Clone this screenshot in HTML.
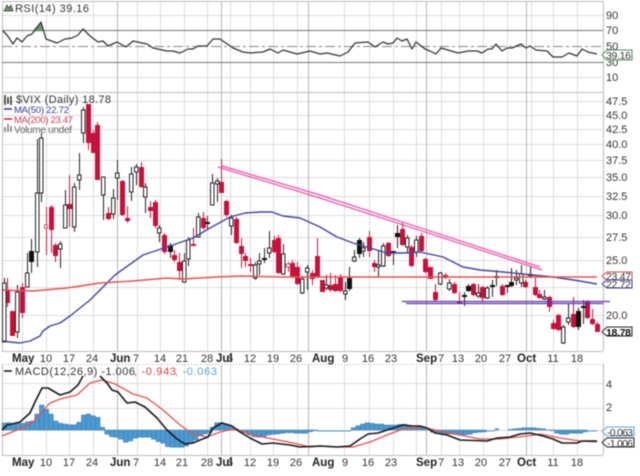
<!DOCTYPE html>
<html><head><meta charset="utf-8"><title>$VIX</title>
<style>html,body{margin:0;padding:0;background:#fff}svg{display:block;filter:blur(.4px)}text{font-family:"Liberation Sans",sans-serif;font-size:11px;fill:#333}.b{font-weight:bold;fill:#222;font-size:11.5px}.m{text-anchor:middle}</style></head>
<body>
<svg width="640" height="476" viewBox="0 0 640 476" xmlns="http://www.w3.org/2000/svg">
<rect width="640" height="476" fill="#fff"/>
<!-- grid -->
<path fill="none" stroke="#dcdcdc" d="M22.5 1V351M46.5 1V351M69.5 1V351M93.5 1V351M137.5 1V351M160.5 1V351M184.5 1V351M207.5 1V351M230.5 1V351M250.5 1V351M273.5 1V351M297.5 1V351M344.5 1V351M369.5 1V351M393.5 1V351M416.5 1V351M441.5 1V351M459.5 1V351M483.5 1V351M507.5 1V351M531.5 1V351M553.5 1V351M577.5 1V351
M22.5 364V455M46.5 364V455M69.5 364V455M93.5 364V455M137.5 364V455M160.5 364V455M184.5 364V455M207.5 364V455M230.5 364V455M250.5 364V455M273.5 364V455M297.5 364V455M344.5 364V455M369.5 364V455M393.5 364V455M416.5 364V455M441.5 364V455M459.5 364V455M483.5 364V455M507.5 364V455M531.5 364V455M553.5 364V455M577.5 364V455
M2 15.5H603M2 77.5H603M2 101.5H603M2 115.5H603M2 129.5H603M2 144.5H603M2 160.5H603M2 177.5H603M2 196.5H603M2 215.5H603M2 237.5H603M2 260.5H603M2 287.5H603M2 315.5H603M2 383.5H603M2 408.5H603M2 430.5H603"/>
<path fill="none" stroke="#b4b4b4" d="M117.5 1V351M221.5 1V351M308.5 1V351M426.5 1V351M526.5 1V351M117.5 364V455M221.5 364V455M308.5 364V455M426.5 364V455M526.5 364V455"/>
<path fill="none" stroke="#bdbdbd" d="M2.5 1V92M2.5 92V351M2.5 364V455M603.5 1V351M603.5 364V455M2 1.5H603M2 92.5H603M2 351.5H603M2 455.5H603"/>
<path fill="none" stroke="#aaa" stroke-dasharray="1 2" d="M2 364.5H603"/>
<!-- RSI -->
<path fill="none" stroke="#777" d="M2 30.5H603M2 62.5H603"/>
<path fill="none" stroke="#888" stroke-dasharray="10 3 3 3" d="M2 46.5H603"/>
<path fill="#6f9a68" stroke="#4f7a4a" stroke-width=".5" d="M33 31L41 22L44 31Z"/>
<path fill="none" stroke="#333" stroke-width="1.25" stroke-linejoin="round" d="M3 31L7 35L13 44L17 38L22 42L27 36L32 34L41 22L46 39L57 43L65 39L72 38L78 35L83 29L90 36L98 42L103 41L108 46L117 42L126 47L133 41L142 43L147 44L153 48L167 51L173 51L180 53L188 49L193 49L198 46L207 46L213 39L220 39L233 48L243 52L250 53L263 52L270 49L278 53L283 50L297 54L310 51L320 54L327 53L340 56L348 52L355 43L368 42L375 47L383 42L388 44L393 43L397 38L402 41L407 39L412 49L416 42L425 49L430 51L436 54L441 48L458 53L468 51L477 51L482 53L488 49L492 49L496 44L502 51L507 48L512 48L521 44L526 48L530 46L536 50L547 51L553 57L562 57L569 53L577 56L582 49L588 52L597 54"/>
<!-- candle wicks -->
<path fill="none" stroke="#222" d="M4.5 278V342M17.5 285V338M27.5 253V287M31.5 239V273M37.5 139V267M41.5 133V202M60.5 241V268M65.5 190V228M74.5 183V232M79.5 153V190M83.5 107V143M103.5 177V220M113.5 189V219M117.5 160V200M131.5 167V201M136.5 164V185M145.5 183V213M159.5 225V242M170.5 243V258M184.5 253V283M188.5 237V266M198.5 213V237M207.5 216V229M212.5 174V205M217.5 178V202M231.5 215V235M255.5 262V280M259.5 253V275M264.5 248V263M269.5 231V258M283.5 244V275M302.5 276V294M307.5 265V290M326.5 275V290M345.5 282V300M349.5 267V291M354.5 250V262M359.5 238V258M363.5 242V257M378.5 250V277M383.5 243V267M393.5 251V265M397.5 225V248M407.5 235V253M416.5 236V257M440.5 272V285M449.5 279V291M464.5 292V306M468.5 284V292M478.5 284V298M487.5 286V299M492.5 280V297M496.5 270V286M507.5 285V293M511.5 268V287M516.5 270V285M521.5 265V287M530.5 267V278M544.5 290V300M563.5 325V344M568.5 304V325M578.5 308V330M583.5 300V324"/>
<path fill="none" stroke="#c8103c" d="M7.5 278V307M22.5 283V318M46.5 207V255M51.5 205V253M55.5 243V262M69.5 175V227M88.5 104V150M93.5 130V153M97.5 122V180M108.5 207V220M122.5 180V216M127.5 206V223M141.5 162V188M150.5 201V218M155.5 200V228M164.5 233V254M174.5 250V262M179.5 253V280M193.5 228V246M203.5 212V230M221.5 159V193M226.5 200V217M236.5 217V244M241.5 238V268M245.5 253V267M250.5 258V272M274.5 236V253M278.5 235V274M288.5 262V272M292.5 260V278M297.5 262V285M312.5 270V285M317.5 238V278M330.5 273V292M335.5 275V292M340.5 274V292M369.5 231V257M374.5 260V272M388.5 242V257M402.5 223V246M411.5 245V267M421.5 233V252M425.5 258V273M435.5 284V302M445.5 273V279M454.5 282V294M459.5 292V304M473.5 283V296M482.5 286V302M502.5 284V296M525.5 280V288M535.5 278V296M539.5 290V299M549.5 296V312M553.5 320V330M558.5 314V331M573.5 297V328M587.5 300V319M592.5 309V325M597.5 322V332"/>
<!-- red bodies -->
<path fill="#c8103c" d="M5 290h5v13h-5zM10 311h5v25h-5zM20 287h5v26h-5zM49 207h5v23h-5zM53 245h5v11h-5zM67 204h5v5h-5zM86 104h5v39h-5zM91 133h5v20h-5zM95 125h5v55h-5zM106 213h5v6h-5zM120 181h5v34h-5zM125 218h5v3h-5zM139 167h5v20h-5zM148 207h5v4h-5zM153 202h5v24h-5zM162 235h5v17h-5zM172 255h5v5h-5zM177 262h5v9h-5zM191 244h5v2h-5zM201 218h5v10h-5zM219 182h5v11h-5zM224 201h5v14h-5zM234 219h5v24h-5zM239 246h5v8h-5zM243 256h5v5h-5zM248 264h5v2h-5zM272 240h5v12h-5zM276 238h5v35h-5zM290 263h5v14h-5zM295 267h5v17h-5zM310 273h5v6h-5zM315 256h5v21h-5zM320 280h5v12h-5zM328 285h5v5h-5zM333 284h5v7h-5zM338 277h5v14h-5zM367 237h5v14h-5zM372 263h5v4h-5zM386 243h5v13h-5zM400 229h5v16h-5zM409 247h5v19h-5zM419 236h5v15h-5zM423 259h5v13h-5zM428 267h5v12h-5zM433 292h5v8h-5zM443 275h5v3h-5zM452 284h5v9h-5zM457 301h5v3h-5zM471 284h5v11h-5zM480 287h5v11h-5zM500 286h5v9h-5zM523 282h5v5h-5zM533 287h5v8h-5zM537 294h5v4h-5zM547 297h5v10h-5zM551 323h5v6h-5zM556 315h5v15h-5zM571 314h5v13h-5zM585 302h5v16h-5zM590 319h5v5h-5zM595 324h5v8h-5z"/>
<path fill="#fff" stroke="#d05070" d="M44.5 225h3v3h-3zM286 264h4v3h-4z"/>
<!-- black bodies -->
<path fill="#111" d="M29 251h5v11h-5zM168 245h5v7h-5zM205 222h5v2h-5zM262 258h5v2h-5zM347 278h5v11h-5zM357 240h5v14h-5zM391 251h5v2h-5zM395 233h5v4h-5zM462 295h5v2h-5zM466 286h5v5h-5zM490 285h5v2h-5zM494 276h5v2h-5zM505 285h5v2h-5zM509 282h5v4h-5zM528 274h5v2h-5zM576 311h5v16h-5zM581 306h5v2h-5z"/>
<!-- white bodies -->
<path fill="#fff" stroke="#222" d="M2.5 283h3.5v59h-3.5zM15.5 292h3.5v40h-3.5zM25.5 273h3.500v14h-3.5zM35.5 193h3.5v59h-3.5zM39.5 138h3.5v55h-3.5zM58.5 244h3.5v5h-3.5zM63.5 205h3.5v23h-3.5zM72.5 187h3.5v40h-3.5zM77.5 175h3.5v5h-3.5zM81.5 110h3.5v23h-3.5zM101.5 177h3.5v18h-3.5zM111.5 198h3.5v16h-3.5zM115.5 173h3.5v5h-3.5zM129.5 174h3.5v18h-3.5zM134.5 167h3.5v5h-3.5zM143.5 187h3.5v10h-3.5zM157.5 228h3.5v5h-3.5zM182.5 261h3.5v21h-3.5zM186.5 240h3.5v19h-3.5zM196.5 217h3.5v20h-3.5zM210.5 183h3.5v22h-3.5zM215.5 181h3.5v3h-3.5zM229.5 218h3.5v8h-3.5zM253.5 265h3.5v13h-3.5zM257.5 261h3.5v3h-3.5zM267.5 248h3.5v5h-3.5zM281.5 254h3.5v20h-3.5zM300.5 279h3.5v14h-3.5zM305.5 268h3.5v4h-3.5zM324.5 285h3.5v3h-3.5zM343.5 291h3.5v3h-3.5zM352.5 257h3.5v4h-3.5zM361.5 248h3.5v3h-3.5zM376.5 265h3.5v2h-3.5zM381.5 246h3.5v20h-3.5zM405.5 238h3.5v9h-3.5zM414.5 240h3.5v12h-3.5zM438.5 273h3.5v11h-3.5zM447.5 283h3.5v6h-3.5zM476.5 293h3.5v3h-3.5zM485.5 288h3.5v10h-3.5zM514.5 278h3.5v2h-3.5zM519.5 274h3.5v9h-3.5zM542.5 297h3.5v2h-3.5zM561.5 327h3.5v16h-3.5zM566.5 318h3.5v4h-3.5z"/>
<!-- moving averages -->
<path fill="none" stroke="#4444a4" stroke-width="1.4" stroke-linejoin="round" d="M3 341L10 342L20 343L30 341L40 336L43 331L50 326L60 323L70 316L80 308L90 300L100 290L110 280L115 275L143 255L170 246L193 238L210 228L230 217L245 213L260 212L272 212L283 216L300 218L320 227L337 237L353 243L370 248L387 253L403 253L420 252L443 257L463 267L480 270L503 272L533 275L553 277L580 281L597 284"/>
<path fill="none" stroke="#ea4f50" stroke-width="1.4" stroke-linejoin="round" d="M3 290L33 291L67 288L100 283L133 281L167 278L183 279L217 277L240 276L283 277L320 277L420 277L597 277"/>
<!-- trendlines -->
<path fill="none" stroke="#f04fa8" stroke-width="1.2" d="M218 167L320 198L542 270M222 166L320 195L540 267"/>
<path fill="none" stroke="#6030b4" stroke-width="1.2" d="M402 301.500H610M406 303.500H603"/>
<!-- MACD histogram -->
<path fill="#4b9ad2" stroke="#3f7fae" stroke-width=".5" d="M2 430V423h4.7V430zM6.7 430V422.7h4.7V430zM11.4 430V424h4.7V430zM16 430V423.3h4.7V430zM20.7 430V423.3h4.7V430zM25.4 430V421.7h4.7V430zM30 430V421h4.7V430zM34.7 430V414h4.7V430zM39.4 430V405h4.7V430zM44 430V409.3h4.7V430zM48.7 430V414h4.7V430zM53.4 430V421h4.7V430zM58 430V423.3h4.7V430zM62.7 430V424h4.7V430zM67.4 430V424.7h4.7V430zM72 430V424.7h4.7V430zM76.7 430V422.3h4.7V430zM81.4 430V415h4.7V430zM86 430V414h4.7V430zM90.7 430V415.7h4.7V430zM95.4 430V417.3h4.7V430zM100 430V427.3h4.7V430zM104.7 430V434.3h4.7V430zM109.4 430V436.7h4.7V430zM114 430V437.3h4.7V430zM118.7 430V439.3h4.7V430zM123.4 430V442.3h4.7V430zM128 430V441h4.7V430zM132.7 430V438.3h4.7V430zM137.4 430V437.3h4.7V430zM142 430V437.3h4.7V430zM146.7 430V437.3h4.7V430zM151.4 430V439.3h4.7V430zM156 430V441.7h4.7V430zM160.7 430V443.3h4.7V430zM165.4 430V446.7h4.7V430zM170 430V447.3h4.7V430zM174.7 430V447.3h4.7V430zM179.4 430V447.3h4.7V430zM184 430V446h4.7V430zM188.7 430V443.3h4.7V430zM193.4 430V440h4.7V430zM198 430V436h4.7V430zM202.7 430V434h4.7V430zM207.4 430V432.7h4.7V430zM210 430V427.3h4.7V430zM214.7 430V422.7h4.7V430zM219.4 430V422.7h4.7V430zM224 430V424h4.7V430zM228.7 430V426.7h4.7V430zM233.4 430V428.7h4.7V430zM238 430V431h4.7V430zM242.7 430V432.7h4.7V430zM247.4 430V435h4.7V430zM252 430V436.7h4.7V430zM256.7 430V437.3h4.7V430zM261.4 430V436.7h4.7V430zM266 430V435h4.7V430zM270.7 430V434.3h4.7V430zM275.4 430V434h4.7V430zM280 430V433.3h4.7V430zM284.7 430V432.7h4.7V430zM289.4 430V432.7h4.7V430zM294 430V433.3h4.7V430zM298.7 430V433.3h4.7V430zM303.4 430V433.3h4.7V430zM308 430V431.7h4.7V430zM312.7 430V430.7h4.7V430z"/>
<path fill="#4b9ad2" stroke="#3f7fae" stroke-width=".5" d="M351 430V427.7h4.7V430zM355.7 430V425.7h4.7V430zM360.4 430V424h4.7V430zM365 430V422.7h4.7V430zM369.7 430V423.3h4.7V430zM374.4 430V424h4.7V430zM379 430V424h4.7V430zM383.7 430V425h4.7V430zM388.4 430V425h4.7V430zM393 430V425h4.7V430zM397.7 430V424.3h4.7V430zM402.4 430V424.3h4.7V430zM407 430V426h4.7V430zM411.7 430V427.3h4.7V430zM416.4 430V426.7h4.7V430zM421 430V427.7h4.7V430zM425.7 430V430h4.7V430zM430.4 430V432.3h4.7V430zM435 430V432.3h4.7V430zM439.7 430V433.3h4.7V430zM444.4 430V434h4.7V430zM449 430V434h4.7V430zM453.7 430V434.3h4.7V430zM458.4 430V434.7h4.7V430zM463 430V434.7h4.7V430zM467.7 430V434.3h4.7V430zM472.4 430V432.7h4.7V430zM477 430V432.3h4.7V430zM481.7 430V432h4.7V430zM495 430V428.7h3.7V430zM508 430V429.3h4.7V430zM512.7 430V428.7h4.7V430zM517.4 430V428.3h4.7V430zM522 430V427.7h4.7V430zM526.7 430V427.7h4.7V430zM531.4 430V427.7h4.7V430zM536 430V428.3h4.7V430zM540.7 430V428.7h4.7V430zM545.4 430V430h4.7V430zM550 430V430.7h4.7V430zM554.7 430V433.3h4.7V430zM559.4 430V434.3h4.7V430zM564 430V434.3h4.7V430zM568.7 430V433.3h4.7V430zM573.4 430V433.3h4.7V430zM578 430V433.3h4.7V430zM582.7 430V432h4.7V430z"/>
<path fill="none" stroke="#4b9ad2" d="M317 431H351M482 431H495M587 431H597"/>
<!-- MACD lines -->
<path fill="none" stroke="#e85050" stroke-width="1.3" stroke-linejoin="round" d="M2 436L17 430L33 422L50 403L60 399L77 395L90 383L102 380L115 384L133 394L147 398L163 410L180 425L193 434L207 437L220 432L233 429L253 435L273 439L293 443L310 447L320 446L340 447L353 447L370 442L387 435L403 429L423 427L443 432L460 435L480 439L500 439L527 436L540 434L560 438L580 441L597 442"/>
<path fill="none" stroke="#1a1a1a" stroke-width="1.6" stroke-linejoin="round" d="M2 430L7 425L12 424L20 422L30 413L35 402L42 388L48 388L60 395L70 392L78 385L83 376M100 376L107 383L112 390L118 392L127 403L135 402L145 407L157 418L167 430L177 439L185 444L193 443L200 440L208 437L213 428L222 423L232 426L240 432L250 438L262 444L273 443L290 445L300 447L320 446L337 447L350 446L360 439L368 434L378 433L387 430L403 425L413 426L420 426L427 428L435 433L447 435L460 440L487 441L497 438L510 437L520 434L530 433L543 436L553 439L562 443L577 443L582 441L597 441"/>
<!-- legends -->
<path fill="#6f9a68" stroke="#333" stroke-width=".7" d="M4 11L7 5L9 8L11 5L13 11Z"/>
<text x="15" y="12" textLength="74" lengthAdjust="spacing">RSI(14) 39.16</text>
<path fill="none" stroke="#222" stroke-width="1.4" d="M5 95V105M8 97V104M11 96V105"/>
<text x="16" y="103" textLength="95" lengthAdjust="spacing">$VIX (Daily) 18.78</text>
<path stroke="#33338f" stroke-width="1.5" d="M4 109H12"/>
<text x="14" y="113" textLength="55" lengthAdjust="spacing" style="fill:#3a3a9a;font-size:9.500px">MA(50) 22.72</text>
<path stroke="#d81a3a" stroke-width="1.5" d="M4 119H12"/>
<text x="14" y="123" textLength="59" lengthAdjust="spacing" style="fill:#d04055;font-size:9.500px">MA(200) 23.47</text>
<path fill="none" stroke="#777" stroke-width="1.4" d="M5 127V132M8 124V132M11 126V132"/>
<text x="14" y="133" textLength="58" lengthAdjust="spacing" style="fill:#666;font-size:10px">Volume undef</text>
<path stroke="#111" stroke-width="1.5" d="M4 371H12"/>
<text x="15" y="375" textLength="120" lengthAdjust="spacing">MACD(12,26,9) -1.006</text>
<text x="134" y="375" textLength="42" lengthAdjust="spacing" style="fill:#e04040">, -0.943</text>
<text x="175" y="375" textLength="42" lengthAdjust="spacing" style="fill:#5aa5d8">, -0.063</text>
<!-- right scale -->
<g>
<text x="606" y="19">90</text><text x="606" y="34">70</text><text x="606" y="50">50</text><text x="606" y="66">30</text><text x="606" y="81">10</text>
<text x="606" y="105">47.5</text><text x="606" y="119">45.0</text><text x="606" y="133">42.5</text><text x="606" y="148">40.0</text><text x="606" y="164">37.5</text><text x="606" y="181">35.0</text><text x="606" y="200">32.5</text><text x="606" y="219">30.0</text><text x="606" y="241">27.5</text><text x="606" y="264">25.0</text><text x="606" y="319">20.0</text>
<text x="606" y="388">4</text><text x="606" y="411">2</text>
</g>
<!-- tags -->
<path fill="#fff" stroke="#4f8a55" d="M602 55l5-5h25v10h-25z"/>
<text x="606" y="59" textLength="25" style="font-size:10.5px">39.16</text>
<path fill="#fff" stroke="#d84050" d="M602 276l5-4h25v8h-25z"/>
<text x="606" y="280" textLength="25" style="font-size:10.5px">23.47</text>
<path fill="#fff" stroke="#3a3a9a" d="M602 284l5-4h25v8h-25z"/>
<text x="606" y="288" textLength="25" style="font-size:10.5px">22.72</text>
<path fill="#fff" stroke="#222" d="M602 332l5-5h25v9h-25z"/>
<text x="606" y="336" textLength="25" style="font-size:10.5px;font-weight:bold;fill:#111">18.78</text>
<path fill="#fff" stroke="#5aa5d8" d="M602 431.500l5-4.500h27v9h-27z"/>
<text x="607" y="436" textLength="26" style="font-size:10.5px">-0.063</text>
<path fill="#fff" stroke="#222" d="M602 442.500l5-4.500h27v9h-27z"/>
<text x="607" y="447" textLength="26" style="font-size:10.5px">-1.006</text>
<!-- x axes -->
<g>
<text class="b" x="12" y="362">May</text><text class="m" x="46" y="362">10</text><text class="m" x="69" y="362">17</text><text class="m" x="92" y="362">24</text><text class="b" x="110" y="362">Jun</text><text class="m" x="136" y="362">7</text><text class="m" x="160" y="362">14</text><text class="m" x="182" y="362">21</text><text class="m" x="207" y="362">28</text><text class="b" x="216" y="362">Jul</text><text class="m" x="230" y="362">6</text><text class="m" x="250" y="362">12</text><text class="m" x="273" y="362">19</text><text class="m" x="296" y="362">26</text><text class="b" x="312" y="362">Aug</text><text class="m" x="345" y="362">9</text><text class="m" x="368" y="362">16</text><text class="m" x="391" y="362">23</text><text class="b" x="416" y="362">Sep</text><text class="m" x="441" y="362">7</text><text class="m" x="458" y="362">13</text><text class="m" x="481" y="362">20</text><text class="m" x="505" y="362">27</text><text class="b" x="517" y="362">Oct</text><text class="m" x="553" y="362">11</text><text class="m" x="577" y="362">18</text>
<text class="b" x="12" y="466">May</text><text class="m" x="46" y="466">10</text><text class="m" x="69" y="466">17</text><text class="m" x="92" y="466">24</text><text class="b" x="110" y="466">Jun</text><text class="m" x="136" y="466">7</text><text class="m" x="160" y="466">14</text><text class="m" x="182" y="466">21</text><text class="m" x="207" y="466">28</text><text class="b" x="216" y="466">Jul</text><text class="m" x="230" y="466">6</text><text class="m" x="250" y="466">12</text><text class="m" x="273" y="466">19</text><text class="m" x="296" y="466">26</text><text class="b" x="312" y="466">Aug</text><text class="m" x="345" y="466">9</text><text class="m" x="368" y="466">16</text><text class="m" x="391" y="466">23</text><text class="b" x="416" y="466">Sep</text><text class="m" x="441" y="466">7</text><text class="m" x="458" y="466">13</text><text class="m" x="481" y="466">20</text><text class="m" x="505" y="466">27</text><text class="b" x="517" y="466">Oct</text><text class="m" x="553" y="466">11</text><text class="m" x="577" y="466">18</text>
</g>
</svg>
</body></html>
